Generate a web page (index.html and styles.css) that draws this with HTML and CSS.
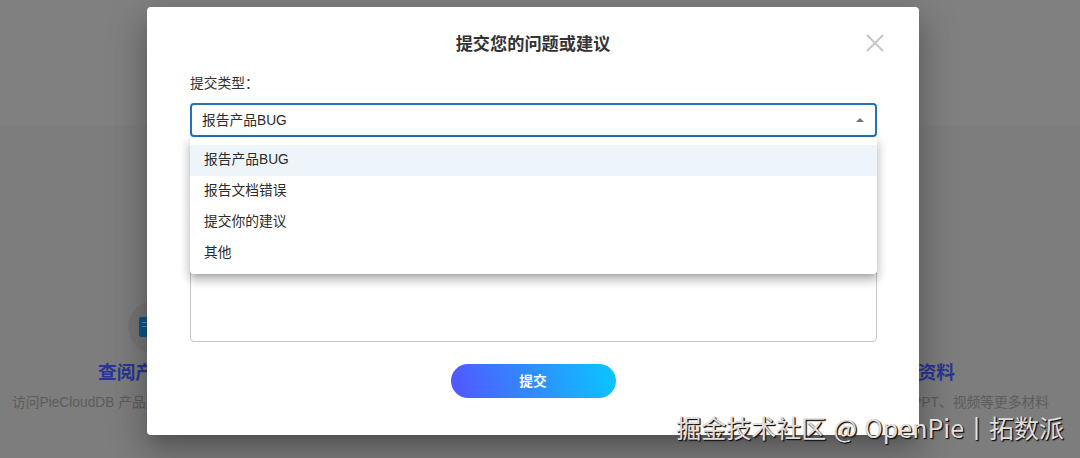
FILE: index.html
```
<!DOCTYPE html>
<html lang="zh-CN">

<head>
    <meta charset="UTF-8">
    <meta name="viewport" content="width=device-width, initial-scale=1.0">
    <title>提交您的问题或建议</title>
    <link rel="stylesheet" href="styles.css">
</head>

<body>
    <main class="page">
        <section class="card">
            <div class="card-icon">
                <svg width="30" height="20" viewBox="0 0 30 20">
                    <rect width="30" height="20" rx="2" fill="#0e548c" />
                    <path d="M3 5.500h8M3 9.500h8" stroke="#5d8cae" stroke-width="1" />
                </svg>
            </div>
            <h3>查阅产品文档</h3>
            <p>访问PieCloudDB 产品文档</p>
        </section>
        <section class="card card-right">
            <h3>资料</h3>
            <p>PPT、视频等更多材料</p>
        </section>
    </main>

    <div class="overlay">
        <form class="dialog">
            <h2>提交您的问题或建议</h2>
            <button type="button" class="close">
                <svg width="18" height="18" viewBox="0 0 18 18">
                    <path d="M1 1l16 16M17 1L1 17" stroke="#c6c6c6" stroke-width="2" />
                </svg>
            </button>
            <label class="label">提交类型：</label>
            <div class="select">
                <span>报告产品BUG</span>
                <i class="arrow"></i>
                <ul class="menu">
                    <li class="active">报告产品BUG</li>
                    <li>报告文档错误</li>
                    <li>提交你的建议</li>
                    <li>其他</li>
                </ul>
            </div>
            <div class="content"></div>
            <button type="button" class="submit">提交</button>
        </form>
    </div>

    <div class="watermark">掘金技术社区 @ OpenPie丨拓数派</div>
</body>

</html>
```

FILE: styles.css
```
* {
    box-sizing: border-box;
}

body {
    margin: 0;
    height: 458px;
    overflow: hidden;
    background: linear-gradient(#808080 125px, #7d7d7d 125px);
    font-family: "Liberation Sans", "Noto Sans CJK SC", sans-serif;
    font-size: 13.75px;
    color: #2b2b2b;
}

h2,
h3,
p,
ul {
    margin: 0;
    padding: 0;
}

.page {
    display: flex;
    justify-content: space-between;
    align-items: flex-end;
    height: 415px;
    padding: 0 31px 0 12px;
}

.card {
    display: flex;
    flex-direction: column;
    width: 284px;
    white-space: nowrap;
}

.card-icon {
    display: flex;
    align-items: center;
    width: 52px;
    height: 52px;
    margin: 0 0 6px 116px;
    padding-left: 11px;
    border-radius: 50%;
    background: #757575;
}

.card h3 {
    margin-left: 86px;
    font-size: 18.7px;
    font-weight: bold;
    line-height: 24px;
    font-family: "Noto Sans CJK SC", sans-serif;
    color: #2a3695;
}

.card p {
    margin-top: 8px;
    line-height: 24px;
    color: #5c5c5c;
}

.card-right {
    align-items: flex-end;
}

.card-right h3 {
    margin: 0 94px 0 0;
}

.overlay {
    position: absolute;
    inset: 0;
    padding: 7px 0 0 147px;
}

.dialog {
    position: relative;
    display: flex;
    flex-direction: column;
    width: 772px;
    height: 428px;
    padding: 25px 42px 0 43px;
    background: #fff;
    border-radius: 4px;
    box-shadow: 0 9px 13px -6px rgba(0, 0, 0, .2), 0 20px 32px 3px rgba(0, 0, 0, .14), 0 8px 39px 7px rgba(0, 0, 0, .12);
}

.dialog h2 {
    padding-right: 1px;
    font-size: 17.2px;
    line-height: 24px;
    text-align: center;
    color: #333;
}

.close {
    position: absolute;
    top: 27px;
    right: 35px;
    width: 18px;
    height: 18px;
    padding: 0;
    border: 0;
    background: none;
}

.close svg {
    display: block;
}

.label {
    margin-top: 18px;
    line-height: 20px;
    color: #333;
}

.select {
    position: relative;
    display: flex;
    flex: none;
    align-items: center;
    justify-content: space-between;
    height: 34px;
    margin-top: 9px;
    padding: 0 11px 2px 10px;
    border: 2px solid #2172b8;
    border-radius: 4px;
}

.arrow {
    margin-top: 1px;
    border: 4px solid transparent;
    border-top: 0;
    border-bottom: 4px solid #757575;
}

.menu {
    position: absolute;
    top: 33px;
    left: -2px;
    right: -2px;
    height: 136px;
    padding-top: 7px;
    list-style: none;
    background: #fff;
    border-radius: 0 0 4px 4px;
    box-shadow: 0 4px 5px -3px rgba(0, 0, 0, .2), 0 7px 9px 1px rgba(0, 0, 0, .14), 0 3px 12px 2px rgba(0, 0, 0, .12);
}

.menu li {
    height: 31px;
    padding-left: 14px;
    line-height: 30px;
}

.menu .active {
    background: #edf4fa;
}

.content {
    height: 142px;
    margin-top: 63px;
    border: 1px solid #c8c8c8;
    border-radius: 4px;
}

.submit {
    align-self: center;
    width: 165px;
    height: 34px;
    margin: 22px 1px 0 0;
    padding: 0 0 2px;
    border: 0;
    border-radius: 17px;
    background: linear-gradient(75deg, #5454ff, #08c8ff);
    font: bold 13.75px "Noto Sans CJK SC", sans-serif;
    color: #fff;
}

.watermark {
    position: absolute;
    right: 16px;
    bottom: 13px;
    font: 25px/36px "Noto Sans CJK SC", sans-serif;
    word-spacing: 1.6px;
    color: #e0dede;
    text-shadow: 1px 1px 1px #111, 1px 1px 1px #222;
    white-space: nowrap;
}
```
